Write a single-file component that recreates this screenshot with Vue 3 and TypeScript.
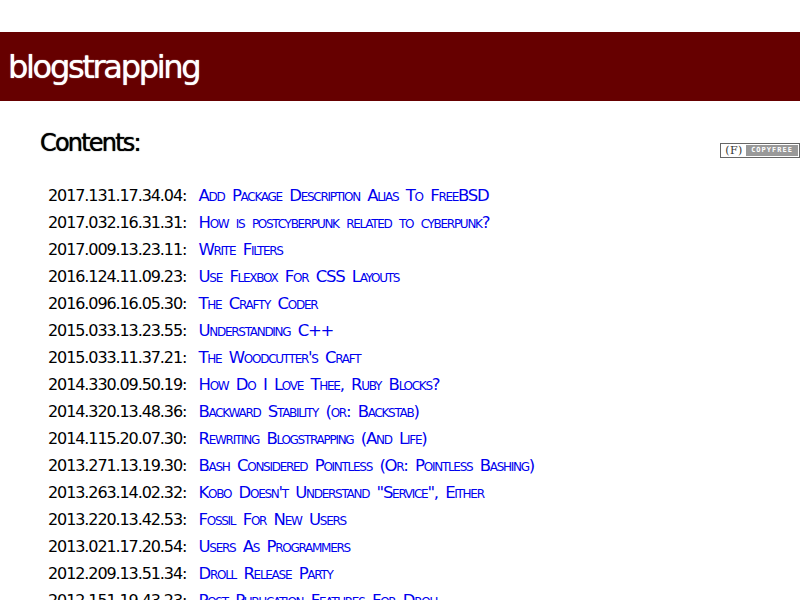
<script setup lang="ts">
const posts: [string, string][] = [
  ['2017.131.17.34.04', 'Add Package Description Alias To FreeBSD'],
  ['2017.032.16.31.31', 'How is postcyberpunk related to cyberpunk?'],
  ['2017.009.13.23.11', 'Write Filters'],
  ['2016.124.11.09.23', 'Use Flexbox For CSS Layouts'],
  ['2016.096.16.05.30', 'The Crafty Coder'],
  ['2015.033.13.23.55', 'Understanding C++'],
  ['2015.033.11.37.21', "The Woodcutter's Craft"],
  ['2014.330.09.50.19', 'How Do I Love Thee, Ruby Blocks?'],
  ['2014.320.13.48.36', 'Backward Stability (or: Backstab)'],
  ['2014.115.20.07.30', 'Rewriting Blogstrapping (And Life)'],
  ['2013.271.13.19.30', 'Bash Considered Pointless (Or: Pointless Bashing)'],
  ['2013.263.14.02.32', 'Kobo Doesn\'t Understand "Service", Either'],
  ['2013.220.13.42.53', 'Fossil For New Users'],
  ['2013.021.17.20.54', 'Users As Programmers'],
  ['2012.209.13.51.34', 'Droll Release Party'],
  ['2012.151.19.43.23', 'Post Publication Features For Drou'],
]
</script>

<template>
  <div class="page">
    <header class="banner"><h1>blogstrapping</h1></header>
    <main class="content">
      <div class="top">
        <h2>Contents:</h2>
        <a class="badge" href="#"><span class="f">(F)</span><span class="cf">COPYFREE</span></a>
      </div>
      <ul>
        <li v-for="p in posts" :key="p[0]">
          <span class="date">{{ p[0] }}:</span>
          <a href="#">{{ p[1] }}</a>
        </li>
      </ul>
    </main>
  </div>
</template>

<style>
html, body { margin: 0; overflow: hidden; background: #fff; }
</style>

<style scoped>
.page { height: 600px; overflow: hidden; font-family: "DejaVu Sans", sans-serif; color: #000; padding-top: 32px; box-sizing: border-box; }
.banner { background: #600; height: 69px; display: flex; align-items: center; padding-left: 8px; }
h1 { margin: 0; color: #fff; font-size: 32px; font-weight: normal; letter-spacing: -2.3px; text-shadow: 0 0 1px #fff; }
.top { height: 81px; padding: 27px 0 0 40px; box-sizing: border-box; position: relative; }
h2 { margin: 0; font-size: 24px; font-weight: normal; line-height: 30px; letter-spacing: -1.8px; text-shadow: 0 0 1px #000; }
.badge { position: absolute; left: 720px; top: 42px; width: 80px; height: 15px; box-sizing: border-box; border: 1px solid #666; display: flex; align-items: stretch; text-decoration: none; background: #fff; padding: 1px; }
.f { font-family: "DejaVu Serif", serif; font-size: 11px; color: #333; width: 24px; text-align: center; line-height: 11px; letter-spacing: 0.5px; }
.cf { flex: 1; background: #999; color: #fff; font-family: "DejaVu Sans Mono", monospace; font-size: 7px; font-weight: bold; line-height: 11px; text-align: center; letter-spacing: 1px; }
ul { list-style: none; margin: 0; padding: 0 0 0 48px; }
li { height: 27px; line-height: 27px; font-size: 16px; white-space: nowrap; display: flex; letter-spacing: -1.1px; }
.date { width: 150.5px; flex: none; }
li a { color: #00e; text-decoration: none; font-variant: small-caps; font-size: 16.5px; letter-spacing: -1.28px; word-spacing: 3.5px; }
</style>
